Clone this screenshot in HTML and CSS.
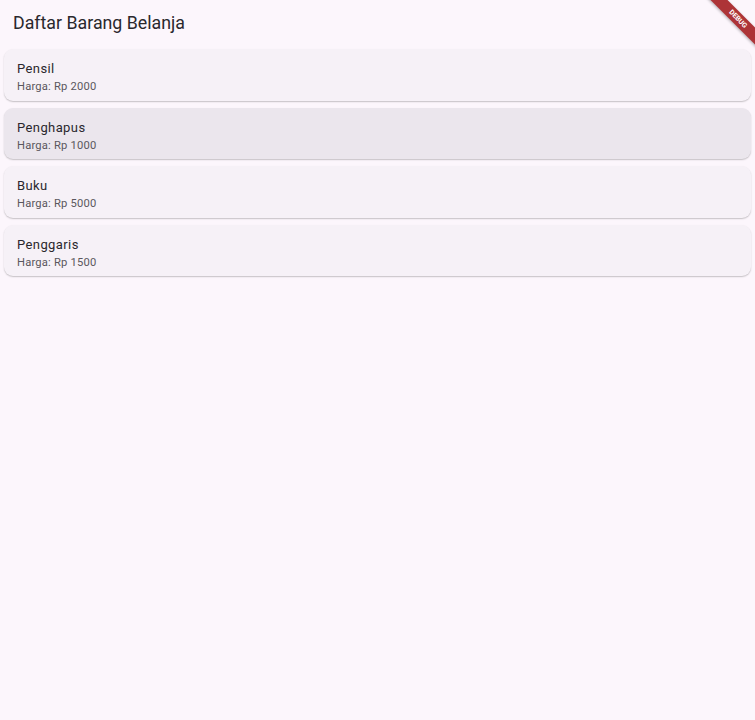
FILE: index.html
```html
<!DOCTYPE html>
<html>
<head>
<meta charset="utf-8">
<link rel="stylesheet" href="styles.css">
</head>
<body>
<div class="app">
  <header class="appbar"><h1 class="title">Daftar Barang Belanja</h1></header>
  <main class="list">
    <div class="card"><div class="name">Pensil</div><div class="price">Harga: Rp 2000</div></div>
    <div class="card hover"><div class="name">Penghapus</div><div class="price">Harga: Rp 1000</div></div>
    <div class="card"><div class="name">Buku</div><div class="price">Harga: Rp 5000</div></div>
    <div class="card"><div class="name">Penggaris</div><div class="price">Harga: Rp 1500</div></div>
  </main>
  <div class="banner"><span>DEBUG</span></div>
</div>
</body>
</html>
```
FILE: styles.css
```css
* { box-sizing: border-box; }
html, body { margin: 0; padding: 0; }
body {
  background: #fcf6fc;
  font-family: Roboto, "Noto Sans", sans-serif;
  color: #1d1b20;
  width: 755px;
  height: 720px;
  overflow: hidden;
}
.app { position: relative; width: 755px; height: 720px; overflow: hidden; }
.appbar {
  height: 45px;
  display: flex;
  align-items: center;
  padding-left: 13px;
}
.title {
  margin: 0;
  font-size: 17.8px;
  font-weight: 400;
  color: #2a282d;
  letter-spacing: 0;
}
.list {
  display: flex;
  flex-direction: column;
  gap: 7px;
  padding: 4px 4px;
}
.card {
  height: 51.6px;
  background: #f6f1f7;
  border-radius: 9px;
  box-shadow: 0 1px 1.5px rgba(0,0,0,0.22);
  padding: 11px 13px 0;
  display: flex;
  flex-direction: column;
}
.card.hover { background: #ebe6ed; }
.name {
  font-size: 13px;
  letter-spacing: 0.4px;
  line-height: 18px;
  color: #2a282d;
}
.price {
  font-size: 11.2px;
  letter-spacing: 0.2px;
  line-height: 17px;
  color: #5a575d;
}
.banner {
  position: absolute;
  top: 0;
  right: 0;
  width: 60px;
  height: 60px;
  overflow: hidden;
}
.banner span {
  position: absolute;
  top: 13px;
  right: -23px;
  width: 80px;
  height: 12px;
  background: #ad3437;
  color: #fff;
  font-size: 7px;
  font-weight: 700;
  line-height: 12px;
  text-align: center;
  transform: rotate(45deg);
  box-shadow: 0 1px 3px rgba(0,0,0,0.3);
}
```
